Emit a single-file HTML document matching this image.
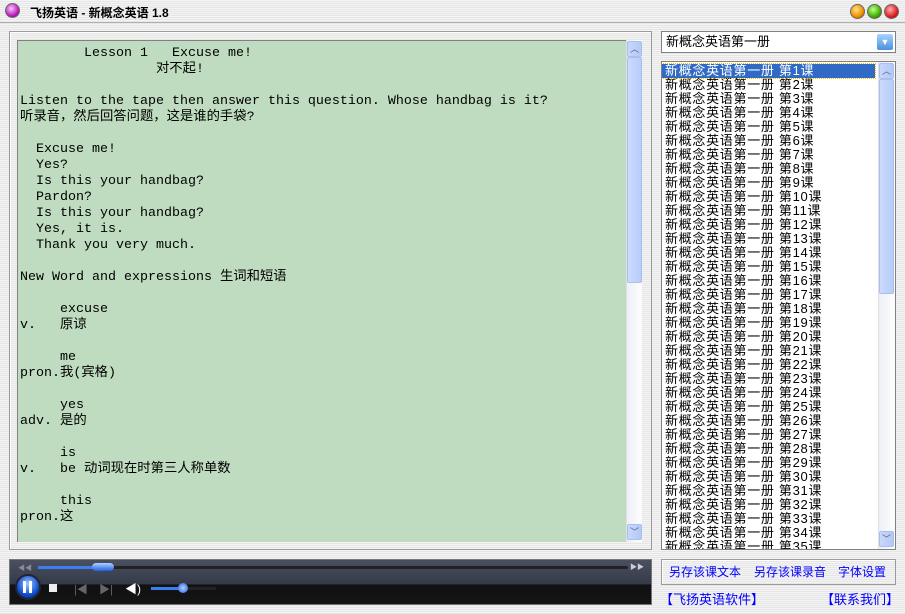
<!DOCTYPE html>
<html><head><meta charset="utf-8"><style>
*{margin:0;padding:0;box-sizing:border-box}
body{width:905px;height:614px;overflow:hidden;position:relative;font-family:"Liberation Sans","Noto Sans CJK SC",sans-serif;
background:repeating-linear-gradient(#f4f4f4 0 1px,#e6e6e6 1px 2px);}
.abs{position:absolute}
.title{left:0;top:0;width:905px;height:23px;border-bottom:1px solid #b0b0b0}
.title span{position:absolute;left:30px;top:4px;font-size:12px;font-weight:bold;color:#000}
.ball{width:15px;height:15px;border-radius:50%;border:1px solid #666}
.frame{border:1px solid #9a9a9a;box-shadow:inset 1px 1px 0 #fff}
.txt{left:17px;top:40px;width:610px;height:502px;background:#c0dcc0;border-top:1px solid #808080;border-left:1px solid #808080;
font-family:"Liberation Mono","Noto Sans CJK SC",monospace;font-size:13.33px;line-height:16px;white-space:pre;padding:5px 0 0 2px;color:#000;overflow:hidden}
.sb{background:linear-gradient(90deg,#eef0f6,#fdfdfd);border-left:1px solid #e0e0e0}
.btn{position:absolute;left:0;width:15px;height:16px;background:linear-gradient(90deg,#c8d8fb,#b4c8f6);border:1px solid #a9bfef;border-radius:2px;color:#4d6185;font-size:9px;text-align:center;line-height:14px}
.thumb{position:absolute;left:0;width:15px;background:linear-gradient(90deg,#cbdaff,#b8ccf8);border:1px solid #a9bfef;border-radius:2px}
.list{left:661px;top:61px;width:235px;height:489px;background:#fff;border:1px solid #808080;overflow:hidden}
.list div{font-family:"Liberation Sans","Noto Sans CJK SC",sans-serif;font-size:13px;letter-spacing:0.7px;line-height:14px;height:14px;padding-left:3px;white-space:pre;color:#000}
.list div.sel{background:#316ac5;color:#fff;outline:1px dotted #f0c000;width:213px}
</style></head><body>
<div class="abs title">
<div class="abs ball" style="left:5px;top:3px;background:radial-gradient(circle at 40% 35%,#f7c8f7,#c020c0 60%,#600060)"></div>
<span>飞扬英语 - 新概念英语 1.8</span>
<div class="abs ball" style="left:850px;top:4px;background:radial-gradient(circle at 40% 35%,#ffe080,#f09000 60%,#a04000)"></div>
<div class="abs ball" style="left:867px;top:4px;background:radial-gradient(circle at 40% 35%,#c0ff90,#40b000 60%,#206000)"></div>
<div class="abs ball" style="left:884px;top:4px;background:radial-gradient(circle at 40% 35%,#ffb0b0,#e02020 60%,#800000)"></div>
</div>
<div class="abs frame" style="left:9px;top:31px;width:643px;height:519px"></div>
<div class="abs txt">        Lesson 1   Excuse me!
                 对不起!

Listen to the tape then answer this question. Whose handbag is it?
听录音，然后回答问题，这是谁的手袋?

  Excuse me!
  Yes?
  Is this your handbag?
  Pardon?
  Is this your handbag?
  Yes, it is.
  Thank you very much.

New Word and expressions 生词和短语

     excuse
v.   原谅

     me
pron.我(宾格)

     yes
adv. 是的

     is
v.   be 动词现在时第三人称单数

     this
pron.这</div>
<div class="abs sb" style="left:626px;top:40px;width:16px;height:502px">
<div class="btn" style="top:1px">︿</div><div class="thumb" style="top:17px;height:226px"></div><div class="btn" style="top:484px">﹀</div></div>

<div class="abs" style="left:661px;top:31px;width:235px;height:22px;background:#fff;border:1px solid #808080;font-size:13px;line-height:20px;padding-left:4px">新概念英语第一册
<div class="abs" style="right:2px;top:2px;width:16px;height:16px;background:linear-gradient(#a8d4ff,#4a90e0);border-radius:2px;color:#fff;font-size:9px;text-align:center;line-height:16px">▼</div></div>

<div class="abs list" id="L"></div>
<div class="abs sb" style="left:878px;top:62px;width:17px;height:487px">
<div class="btn" style="top:1px">︿</div><div class="thumb" style="top:17px;height:215px"></div><div class="btn" style="top:469px">﹀</div></div>

<div class="abs" style="left:9px;top:559px;width:643px;height:46px;background:linear-gradient(#4a5060,#353a48 55%,#111 56%,#141414);border:1px solid #777">
<div class="abs" style="left:8px;top:3px;font-size:7px;color:#889">◀◀</div>
<div class="abs" style="left:28px;top:6px;width:590px;height:3px;background:#222;border-radius:2px"></div>
<div class="abs" style="left:28px;top:6px;width:65px;height:3px;background:#3c7ef0"></div>
<div class="abs" style="left:82px;top:3px;width:22px;height:8px;background:linear-gradient(#b0d0ff,#2060e0);border-radius:4px"></div>
<div class="abs" style="left:620px;top:2px;font-size:7px;color:#ccd">▶▶</div>
<div class="abs" style="left:5px;top:14px;width:26px;height:26px;border-radius:50%;background:radial-gradient(circle at 50% 35%,#9cc8ff,#1050d0 60%,#002080);border:2px solid #223"></div>
<div class="abs" style="left:13px;top:21px;width:3px;height:12px;background:#fff"></div>
<div class="abs" style="left:19px;top:21px;width:3px;height:12px;background:#fff"></div>
<div class="abs" style="left:39px;top:24px;width:8px;height:8px;background:#eee"></div>
<div class="abs" style="left:64px;top:21px;font-size:11px;color:#666">|◀</div>
<div class="abs" style="left:89px;top:21px;font-size:11px;color:#666">▶|</div>
<div class="abs" style="left:115px;top:20px;font-size:12px;color:#fff">◀)</div>
<div class="abs" style="left:141px;top:27px;width:65px;height:3px;background:#222"></div>
<div class="abs" style="left:141px;top:27px;width:33px;height:3px;background:#3c7ef0"></div>
<div class="abs" style="left:168px;top:23px;width:10px;height:10px;border-radius:50%;background:radial-gradient(#b0d0ff,#2060e0)"></div>
</div>

<div class="abs frame" style="left:661px;top:559px;width:235px;height:26px;font-size:12px;color:#0000ff;line-height:24px">
<span class="abs" style="left:7px">另存该课文本</span><span class="abs" style="left:92px">另存该课录音</span><span class="abs" style="left:176px">字体设置</span></div>
<div class="abs" style="left:660px;top:589px;font-size:13px;color:#0000ff">【飞扬英语软件】</div>
<div class="abs" style="left:821px;top:589px;font-size:13px;color:#0000ff">【联系我们】</div>
<script>
var h='';for(var i=1;i<=35;i++)h+='<div'+(i==1?' class="sel"':'')+'>新概念英语第一册 第'+i+'课</div>';
document.getElementById('L').innerHTML='<div style="height:2px;padding:0"></div>'+h;
</script>
</body></html>
